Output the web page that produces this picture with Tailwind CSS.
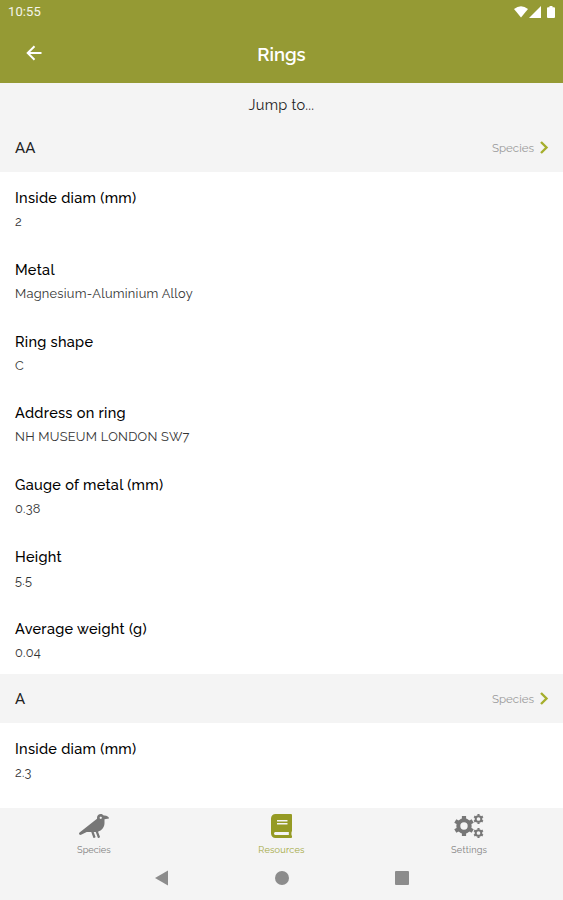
<!DOCTYPE html>
<html lang="en">
<head>
    <meta charset="UTF-8">
    <meta name="viewport" content="width=device-width, initial-scale=1.0">
    <title>Rings</title>
    <script src="https://cdn.jsdelivr.net/npm/@tailwindcss/browser@4"></script>
</head>
<body class="h-[900px] overflow-hidden flex flex-col bg-white font-['Raleway','Lato',sans-serif] text-[#222]">
    <header class="h-[83px] shrink-0 bg-[#959a34] text-white">
        <div class="h-6 pl-2 pr-[7px] flex justify-between items-center">
            <span class="font-[Roboto,sans-serif] text-[13px] tracking-[0.1px] text-white/90">10:55</span>
            <svg class="w-[43px] h-[14px]" viewBox="0 0 43 14" fill="currentColor">
                <path d="M1 4Q8 -1.5 15 4L8 12.5Z" />
                <path d="M28 1V13H16Z" />
                <path d="M36.500 1h3v1.200h1.500q1 0 1 1v8.800q0 1-1 1h-6q-1 0-1-1V3.200q0-1 1-1h1.500z" />
            </svg>
        </div>
        <div class="h-[59px] grid grid-cols-[80px_1fr_80px] items-center">
            <a href="#" class="pl-[26px] pb-[2px]">
                <svg class="w-4 h-4" viewBox="0 0 16 16" fill="none" stroke="currentColor" stroke-width="2">
                    <path d="M15.500 8H2M8.500 1.200L1.700 8l6.800 6.800" />
                </svg>
            </a>
            <h1 class="text-center text-[18.500px] leading-6 font-semibold pt-[2px]">Rings</h1>
        </div>
    </header>

    <main class="flex-1 min-h-0 overflow-hidden">
        <div class="h-[41px] bg-[#f4f4f4] text-center text-[14.500px] leading-[43px] tracking-[0.3px]">Jump to...</div>

        <section>
            <div class="h-12 pl-[15px] pr-[14px] flex justify-between items-center bg-[#f4f4f4]">
                <h2 class="text-[15px] font-medium pt-px">AA</h2>
                <a href="#" class="flex items-center gap-[6px] text-[11.500px] text-[#999]">
                    <span class="pt-px">Species</span>
                    <svg class="w-[9px] h-[13px] mb-px" viewBox="0 0 9 13" fill="none" stroke="#a5ae2c" stroke-width="2.400"><path d="M1 1l5.500 5.500L1 12" /></svg>
                </a>
            </div>
            <dl class="px-[15px] text-[12.800px] leading-6 tracking-[0.260px] text-[#333]">
                <div class="h-[71.750px] pt-[14px]">
                    <dt class="text-[14.500px] font-medium tracking-[0.300px] text-black">Inside diam (mm)</dt>
                    <dd>2</dd>
                </div>
                <div class="h-[71.750px] pt-[14px]">
                    <dt class="text-[14.500px] font-medium tracking-[0.300px] text-black">Metal</dt>
                    <dd>Magnesium-Aluminium Alloy</dd>
                </div>
                <div class="h-[71.750px] pt-[14px]">
                    <dt class="text-[14.500px] font-medium tracking-[0.300px] text-black">Ring shape</dt>
                    <dd>C</dd>
                </div>
                <div class="h-[71.750px] pt-[14px]">
                    <dt class="text-[14.500px] font-medium tracking-[0.300px] text-black">Address on ring</dt>
                    <dd>NH MUSEUM LONDON SW7</dd>
                </div>
                <div class="h-[71.750px] pt-[14px]">
                    <dt class="text-[14.500px] font-medium tracking-[0.300px] text-black">Gauge of metal (mm)</dt>
                    <dd>0.38</dd>
                </div>
                <div class="h-[71.750px] pt-[14px]">
                    <dt class="text-[14.500px] font-medium tracking-[0.300px] text-black">Height</dt>
                    <dd>5.5</dd>
                </div>
                <div class="h-[71.750px] pt-[14px]">
                    <dt class="text-[14.500px] font-medium tracking-[0.300px] text-black">Average weight (g)</dt>
                    <dd>0.04</dd>
                </div>
            </dl>
        </section>

        <section>
            <div class="h-[49px] pl-[15px] pr-[14px] flex justify-between items-center bg-[#f4f4f4]">
                <h2 class="text-[15px] font-medium pt-px">A</h2>
                <a href="#" class="flex items-center gap-[6px] text-[11.500px] text-[#999]">
                    <span class="pt-px">Species</span>
                    <svg class="w-[9px] h-[13px] mb-px" viewBox="0 0 9 13" fill="none" stroke="#a5ae2c" stroke-width="2.400"><path d="M1 1l5.500 5.500L1 12" /></svg>
                </a>
            </div>
            <dl class="px-[15px] text-[12.800px] leading-6 tracking-[0.260px] text-[#333]">
                <div class="h-[71.750px] pt-[14px]">
                    <dt class="text-[14.500px] font-medium tracking-[0.300px] text-black">Inside diam (mm)</dt>
                    <dd>2.3</dd>
                </div>
            </dl>
        </section>
    </main>

    <footer class="h-[92px] shrink-0 bg-[#f4f4f4]">
        <nav class="h-12 pt-[6px] grid grid-cols-3 text-[9.200px] leading-3 text-[#808080]">
            <a href="#" class="flex flex-col items-center gap-[6px]">
                <svg class="w-[30px] h-6" viewBox="0 0 640 512" fill="#777"><path d="M544 32h-16.360C513.040 12.680 490.090 0 464 0c-44.180 0-80 35.820-80 80v20.980L12.090 393.570A30.216 30.216 0 0 0 0 417.740c0 22.460 23.640 37.070 43.730 27.030L165.270 384h96.490l44.410 120.100c2.270 6.230 9.150 9.440 15.380 7.170l22.550-8.210c6.230-2.270 9.440-9.160 7.170-15.380L312.940 384H352c1.910 0 3.760-.23 5.660-.29l44.510 120.380c2.270 6.230 9.150 9.440 15.380 7.170l22.550-8.210c6.230-2.270 9.440-9.160 7.170-15.380l-41.240-111.540C485.740 352.800 544 279.260 544 192v-80l96-16c0-35.350-42.980-64-96-64zm-80 72c-13.250 0-24-10.750-24-24 0-13.260 10.750-24 24-24s24 10.740 24 24c0 13.250-10.750 24-24 24z" /></svg>
                <span>Species</span>
            </a>
            <a href="#" class="flex flex-col items-center gap-[6px] text-[#a3a83c]">
                <svg class="w-[21px] h-6" viewBox="0 0 448 512" fill="#959a24"><path d="M448 360V24c0-13.300-10.700-24-24-24H96C43 0 0 43 0 96v320c0 53 43 96 96 96h328c13.300 0 24-10.700 24-24v-16c0-7.500-3.500-14.300-8.900-18.700-4.200-15.400-4.200-59.300 0-74.700 5.400-4.300 8.900-11.100 8.900-18.600zM128 134c0-3.300 2.700-6 6-6h212c3.300 0 6 2.700 6 6v20c0 3.300-2.700 6-6 6H134c-3.300 0-6-2.700-6-6v-20zm0 64c0-3.300 2.700-6 6-6h212c3.300 0 6 2.700 6 6v20c0 3.300-2.700 6-6 6H134c-3.300 0-6-2.700-6-6v-20zm253.400 250H96c-17.700 0-32-14.300-32-32 0-17.600 14.400-32 32-32h285.400c-1.900 17.100-1.900 46.900 0 64z" /></svg>
                <span class="tracking-[0.2px]">Resources</span>
            </a>
            <a href="#" class="flex flex-col items-center gap-[6px]">
                <svg class="w-[30px] h-6" viewBox="0 0 30 24" fill="none" stroke="#777">
                    <defs>
                        <g id="gear">
                            <circle r="5.700" stroke-width="4" />
                            <path d="M0-6.500V-10M0 6.500V10M5.600-3.250L8.700-5M5.600 3.250L8.700 5M-5.600-3.250L-8.700-5M-5.600 3.250L-8.700 5" stroke-width="4.200" />
                        </g>
                    </defs>
                    <use href="#gear" x="10" y="12" />
                    <use href="#gear" transform="translate(24.500 5) scale(.5)" />
                    <use href="#gear" transform="translate(24.500 19) scale(.5)" />
                </svg>
                <span class="tracking-[0.2px]">Settings</span>
            </a>
        </nav>
        <div class="h-11 flex justify-center items-center gap-[106px] text-[#8c8c8c]">
            <svg class="w-[14px] h-4" viewBox="0 0 14 16" fill="currentColor"><path d="M13 .5v15L0 8z" /></svg>
            <span class="w-[14px] h-[14px] rounded-full bg-current"></span>
            <span class="w-[14px] h-[14px] rounded-[1px] bg-current"></span>
        </div>
    </footer>
</body>
</html>
